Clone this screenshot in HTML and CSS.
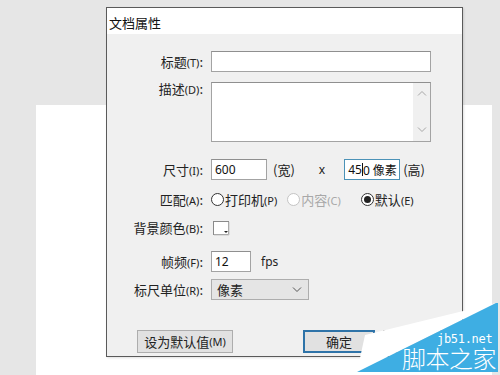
FILE: index.html
```html
<!DOCTYPE html>
<html>
<head>
<meta charset="utf-8">
<link rel="stylesheet" href="styles.css">
</head>
<body>
<div class="desktop">
  <div class="page"></div>

  <div class="dialog">
    <div class="titlebar">文档属性</div>
    <div class="body">
      <div class="row r-title">
        <span class="label">标题<small>(T)</small>:</span>
        <span class="input w-title"></span>
      </div>
      <div class="row r-desc">
        <span class="label">描述<small>(D)</small>:</span>
        <div class="textarea">
          <div class="scrollbar">
            <svg width="10" height="6" viewBox="0 0 10 6"><path d="M1 5.5 L5 1.5 L9 5.5" fill="none" stroke="#a6a6a6" stroke-width="1"/></svg>
            <svg width="10" height="6" viewBox="0 0 10 6"><path d="M1 0.5 L5 4.5 L9 0.5" fill="none" stroke="#a6a6a6" stroke-width="1"/></svg>
          </div>
        </div>
      </div>
      <div class="row r-size">
        <span class="label">尺寸<small>(I)</small>:</span>
        <span class="input w-num">600</span>
        <span class="unit u-wide">(宽)</span>
        <span class="times">x</span>
        <span class="input w-num focus">45<span class="caret"></span>0 像素</span>
        <span class="unit u-high">(高)</span>
      </div>
      <div class="row r-match">
        <span class="label">匹配<small>(A)</small>:</span>
        <span class="radio"></span><span class="opt">打印机<small>(P)</small></span>
        <span class="radio disabled"></span><span class="opt dis">内容<small>(C)</small></span>
        <span class="radio checked"></span><span class="opt">默认<small>(E)</small></span>
      </div>
      <div class="row r-bg">
        <span class="label">背景颜色<small>(B)</small>:</span>
        <svg class="swatch" width="17" height="15" viewBox="0 0 17 15">
          <rect x="0.5" y="0.5" width="15" height="13" fill="#fff" stroke="#8a8a8a"/>
          <path d="M1 14 H16 V1" fill="none" stroke="#c8c8c8"/>
          <path d="M11 10 H15 L13 12 Z" fill="#222"/>
        </svg>
      </div>
      <div class="row r-fps">
        <span class="label">帧频<small>(F)</small>:</span>
        <span class="input w-fps">12</span>
        <span class="unit u-fps">fps</span>
      </div>
      <div class="row r-ruler">
        <span class="label">标尺单位<small>(R)</small>:</span>
        <span class="select">像素
          <svg width="10" height="6" viewBox="0 0 10 6"><path d="M1 0.5 L5 4.5 L9 0.5" fill="none" stroke="#555" stroke-width="1"/></svg>
        </span>
      </div>
      <div class="row r-buttons">
        <span class="btn b-default">设为默认值<small>(M)</small></span>
        <span class="btn b-ok">确定</span>
        <span class="btn b-cancel"></span>
      </div>
    </div>
  </div>

  <div class="watermark">
    <svg width="145" height="75" viewBox="0 0 145 75">
      <polygon points="10,35 141,3 2,72" fill="#ffffff"/>
      <polygon points="141,3 143,3 143,72 2,72" fill="#3eaee3"/>
    </svg>
    <span class="wm-url">jb51.net</span>
    <span class="wm-name">脚本之家</span>
  </div>
</div>
</body>
</html>
```
FILE: styles.css
```css
* { box-sizing: border-box; }
html, body { margin: 0; padding: 0; }
body {
  width: 500px;
  height: 375px;
  overflow: hidden;
  background: #e6e6e6;
  font-family: "Noto Sans", "Noto Sans CJK SC", sans-serif;
  color: #1a1a1a;
}
.desktop {
  position: relative;
  width: 500px;
  height: 375px;
  padding: 105px 0 0 36px;
}
.page {
  width: 456px;
  height: 270px;
  background: #ffffff;
}

.dialog {
  position: absolute;
  left: 106px;
  top: 7px;
  width: 357px;
  height: 350px;
  border: 1px solid #5a5a5a;
  background: #f0f0f0;
  box-shadow: 1px 1px 2px rgba(0,0,0,0.12);
}
.titlebar {
  height: 26px;
  background: #ffffff;
  font-family: "Noto Sans CJK SC", sans-serif;
  font-size: 13px;
  line-height: 26px;
  padding: 2px 0 0 2px;
  color: #111;
}
.body {
  padding-top: 17px;
  font-size: 12px;
}
.row {
  display: flex;
  align-items: center;
  height: 21px;
  font-family: "Noto Sans CJK SC", sans-serif;
}
.row small {
  font-family: "Noto Sans", sans-serif;
  font-size: 11px;
}
.label {
  width: 96px;
  margin-right: 8px;
  text-align: right;
  font-size: 13px;
  color: #222;
  white-space: nowrap;
}
.input {
  display: inline-flex;
  align-items: center;
  height: 21px;
  background: #fff;
  border: 1px solid #a3a3a3;
  border-top-color: #8f8f8f;
  font-family: "Noto Sans", sans-serif;
  font-size: 12px;
  padding-left: 3px;
  color: #111;
}
.w-title { width: 220px; }
.w-num { width: 56px; }
.w-fps { width: 40px; }
.focus {
  border-color: #4b92b7;
  white-space: nowrap;
  font-size: 12px;
  font-family: "Noto Sans", "Noto Sans CJK SC", sans-serif;
}
.caret {
  display: inline-block;
  width: 1px;
  height: 13px;
  background: #111;
}

.r-desc { height: 60px; align-items: flex-start; margin-top: 10px; }
.r-desc .label { margin-top: -1px; line-height: 16px; }
.textarea {
  position: relative;
  width: 220px;
  height: 60px;
  background: #fff;
  border: 1px solid #a3a3a3;
  border-top-color: #8f8f8f;
  display: flex;
  justify-content: flex-end;
}
.scrollbar {
  width: 17px;
  height: 100%;
  background: #f0f0f0;
  display: flex;
  flex-direction: column;
  justify-content: space-between;
  align-items: center;
  padding: 7px 0 8px;
}

.r-size { margin-top: 17px; }
.unit { font-size: 13px; color: #222; }
.u-wide { margin-left: 6px; }
.times { margin-left: 24px; margin-right: 19px; font-family: "Noto Sans", sans-serif; font-size: 12px; }
.u-high { margin-left: 3px; }

.r-match { margin-top: 9px; }
.radio {
  width: 13px;
  height: 13px;
  border-radius: 50%;
  border: 1px solid #333;
  background: #fff;
  position: relative;
  flex: none;
}
.radio.disabled { border-color: #c4c4c4; }
.radio.checked::after {
  content: "";
  position: absolute;
  left: 2px;
  top: 2px;
  width: 7px;
  height: 7px;
  border-radius: 50%;
  background: #222;
}
.opt { font-size: 13px; margin-left: 1px; margin-right: 10px; color: #222; }
.opt.dis { color: #a8a8a8; margin-right: 20px; }

.r-bg { margin-top: 7px; }
.swatch { margin-left: 2px; margin-top: 1px; }

.r-fps { margin-top: 13px; }
.u-fps { margin-left: 10px; font-family: "Noto Sans", sans-serif; font-size: 12px; }

.r-ruler { margin-top: 7px; }
.select {
  width: 98px;
  height: 21px;
  display: flex;
  align-items: center;
  justify-content: space-between;
  padding: 0 6px 0 5px;
  background: #e5e5e5;
  border: 1px solid #adadad;
  font-size: 13px;
  color: #222;
}

.r-buttons { margin-top: 30px; height: 23px; padding-left: 30px; }
.btn {
  height: 23px;
  display: flex;
  align-items: center;
  justify-content: center;
  background: #e1e1e1;
  border: 1px solid #adadad;
  font-size: 13px;
  color: #222;
}
.b-default { width: 96px; }
.b-ok { width: 72px; margin-left: 70px; border: 2px solid #2e73a8; }
.b-cancel { width: 72px; margin-left: 8px; }

.watermark {
  position: absolute;
  left: 355px;
  top: 300px;
  width: 145px;
  height: 75px;
}
.watermark svg { position: absolute; left: 0; top: 0; }
.wm-url {
  position: absolute;
  left: 82px;
  top: 33px;
  font-family: "DejaVu Sans Mono", monospace;
  font-size: 12px;
  line-height: 13px;
  color: #fff;
  letter-spacing: -0.3px;
}
.wm-name {
  position: absolute;
  left: 47px;
  top: 46px;
  font-family: "Noto Sans CJK SC", sans-serif;
  font-weight: 300;
  font-size: 24px;
  line-height: 24px;
  color: #fff;
  letter-spacing: -0.5px;
}
```
